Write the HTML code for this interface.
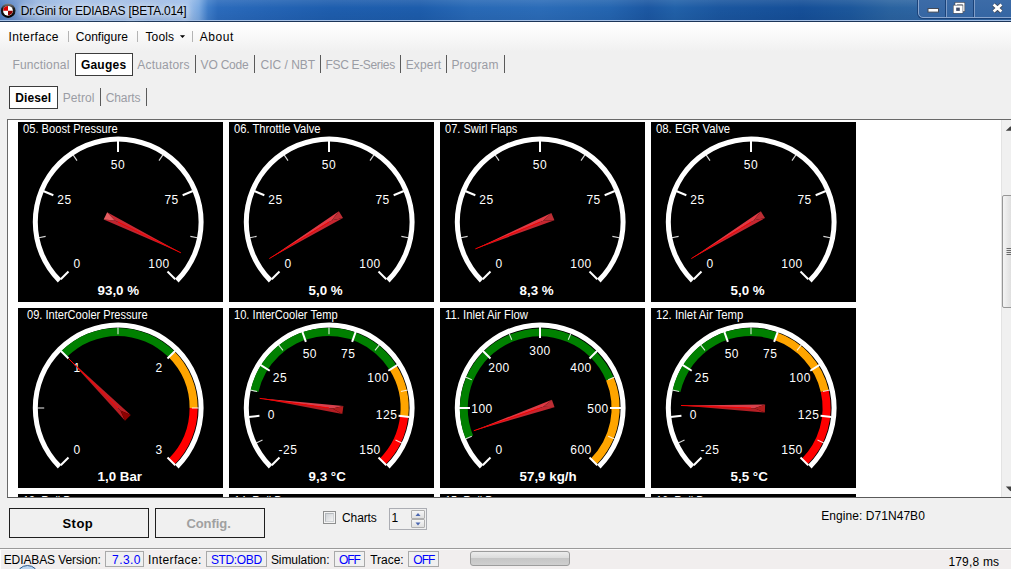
<!DOCTYPE html>
<html><head><meta charset="utf-8"><title>Dr.Gini for EDIABAS [BETA.014]</title>
<style>
html,body{margin:0;padding:0;}
body{width:1011px;height:569px;overflow:hidden;background:#f0f0f0;font-family:"Liberation Sans",sans-serif;}
#root{position:relative;width:1011px;height:569px;overflow:hidden;background:#f0f0f0;}
.t{position:absolute;white-space:nowrap;line-height:1;font-family:"Liberation Sans",sans-serif;}
.a{position:absolute;}
.g{position:absolute;width:205px;height:180px;background:#000;overflow:hidden;}
.g svg{position:absolute;left:0;top:0;}
svg text{font-family:"Liberation Sans",sans-serif;fill:#fff;}
</style></head><body><div id="root">

<div class="a" style="left:0;top:0;width:1011px;height:20px;background:linear-gradient(90deg,#4f7dc0 0px,#6c93cd 16px,#93b2df 36px,#a3c0e7 70px,#9ebce5 150px,#9fc0ea 188px,#7aa9e1 199px,#3f7dc9 208px,#2b6bbc 218px,#2464b5 270px,#1e5eae 330px,#1d5dac 420px,#2869b6 470px,#2b6cb8 540px,#2465b0 610px,#1b57a2 648px,#2161a9 675px,#1a569f 720px,#154f98 800px,#1c579b 850px,#2a63a0 890px,#2d65a2 917px);"></div>
<div class="a" style="left:0;top:0;width:1011px;height:20px;background:linear-gradient(180deg,rgba(255,255,255,0.10) 0,rgba(255,255,255,0) 8px,rgba(0,0,30,0.06) 20px);"></div>
<div class="a" style="left:0;top:20px;width:1011px;height:1px;background:#a4bfe4;"></div>
<div class="a" style="left:0;top:21px;width:1011px;height:1px;background:#1c3558;"></div>
<svg class="a" style="left:0;top:2px" width="17" height="18" viewBox="0 0 17 18">
<defs><linearGradient id="rg" x1="0" y1="0" x2="0" y2="1"><stop offset="0" stop-color="#8a8a8a"/><stop offset="0.35" stop-color="#1a1a1a"/><stop offset="1" stop-color="#000"/></linearGradient></defs>
<circle cx="8.2" cy="8.7" r="7.3" fill="url(#rg)"/>
<circle cx="8" cy="8.8" r="4.9" fill="#fff"/>
<path d="M8 8.7 L8 3.9 A4.8 4.8 0 0 0 3.2 8.7 Z" fill="#d80000"/>
<path d="M8 8.7 L8 13.5 A4.8 4.8 0 0 0 12.8 8.7 Z" fill="#8c0000"/>
</svg>
<span class="t" style="left:20.80px;top:5.00px;font-size:12px;letter-spacing:-0.256px;color:#000;text-shadow:0 0 5px rgba(255,255,255,0.9),0 0 9px rgba(255,255,255,0.7),0 0 12px rgba(255,255,255,0.5);">Dr.Gini for EDIABAS [BETA.014]</span>
<div class="a" style="left:918px;top:-3px;width:100px;height:19px;border:1px solid #89a6cf;border-radius:0 0 0 5px;background:linear-gradient(180deg,#3d6ca8,#3566a3);box-shadow:0 0 0 1px #1b4278;"></div>
<div class="a" style="left:945px;top:0;width:1px;height:17px;background:#1b4278;"></div><div class="a" style="left:946px;top:0;width:1px;height:17px;background:#7f9dc8;"></div>
<div class="a" style="left:973px;top:0;width:1px;height:17px;background:#1b4278;"></div><div class="a" style="left:974px;top:0;width:1px;height:17px;background:#7f9dc8;"></div>
<svg class="a" style="left:920px;top:0" width="91" height="18" viewBox="0 0 91 18">
<rect x="8" y="8.5" width="10.5" height="3.6" fill="#fff" stroke="#454b58" stroke-width="1"/>
<rect x="36.1" y="3.6" width="7.5" height="6.8" fill="none" stroke="#454b58" stroke-width="3"/>
<rect x="36.1" y="3.6" width="7.5" height="6.8" fill="none" stroke="#fff" stroke-width="1.7"/>
<rect x="33" y="4.9" width="10.2" height="8.8" fill="#454b58"/>
<rect x="33.6" y="5.5" width="9" height="7.6" fill="#fff"/>
<rect x="36.2" y="7.6" width="3.6" height="3.3" fill="#3f4a66"/>
<path d="M73.6 4.6 L81.4 11.6 M81.4 4.6 L73.6 11.6" stroke="#454b58" stroke-width="4.2" fill="none"/>
<path d="M73.6 4.6 L81.4 11.6 M81.4 4.6 L73.6 11.6" stroke="#fff" stroke-width="2.7" fill="none"/>
</svg>
<div class="a" style="left:0;top:22px;width:1011px;height:32px;background:linear-gradient(180deg,#ffffff 0,#fdfdfd 6px,#f0f0f0 30px);"></div>
<span class="t" style="left:8.50px;top:31.00px;font-size:12px;letter-spacing:0.412px;color:#000;">Interface</span>
<span class="t" style="left:75.80px;top:31.00px;font-size:12px;letter-spacing:0.007px;color:#000;">Configure</span>
<span class="t" style="left:145.40px;top:31.00px;font-size:12px;letter-spacing:0.177px;color:#000;">Tools</span>
<span class="t" style="left:199.70px;top:31.00px;font-size:12px;letter-spacing:0.588px;color:#000;">About</span>
<div class="a" style="left:68px;top:31px;width:1px;height:11px;background:#b4b4b4;"></div>
<div class="a" style="left:137px;top:31px;width:1px;height:11px;background:#b4b4b4;"></div>
<div class="a" style="left:192px;top:31px;width:1px;height:11px;background:#b4b4b4;"></div>
<svg class="a" style="left:179px;top:35px" width="8" height="5"><path d="M0.9 0.3 L6.1 0.3 L3.5 3 Z" fill="#000"/></svg>
<span class="t" style="left:12.40px;top:59.00px;font-size:12px;letter-spacing:0.173px;color:#9a9ca4;">Functional</span>
<div class="a" style="left:75px;top:53px;width:56px;height:21px;border:1px solid #3c3c3c;background:#fff;"></div>
<span class="t" style="left:80.90px;top:59.00px;font-size:12px;letter-spacing:0.231px;color:#000;font-weight:bold;">Gauges</span>
<span class="t" style="left:137.30px;top:59.00px;font-size:12px;letter-spacing:0.179px;color:#9a9ca4;">Actuators</span>
<span class="t" style="left:200.60px;top:59.00px;font-size:12px;letter-spacing:-0.209px;color:#9a9ca4;">VO Code</span>
<span class="t" style="left:260.50px;top:59.00px;font-size:12px;letter-spacing:0.004px;color:#9a9ca4;">CIC / NBT</span>
<span class="t" style="left:325.60px;top:59.00px;font-size:12px;letter-spacing:-0.346px;color:#9a9ca4;">FSC E-Series</span>
<span class="t" style="left:405.70px;top:59.00px;font-size:12px;letter-spacing:0.153px;color:#9a9ca4;">Expert</span>
<span class="t" style="left:451.40px;top:59.00px;font-size:12px;letter-spacing:0.169px;color:#9a9ca4;">Program</span>
<div class="a" style="left:195px;top:55px;width:1px;height:18px;background:#5a5a5a;"></div>
<div class="a" style="left:254px;top:55px;width:1px;height:18px;background:#5a5a5a;"></div>
<div class="a" style="left:320px;top:55px;width:1px;height:18px;background:#5a5a5a;"></div>
<div class="a" style="left:400px;top:55px;width:1px;height:18px;background:#5a5a5a;"></div>
<div class="a" style="left:446px;top:55px;width:1px;height:18px;background:#5a5a5a;"></div>
<div class="a" style="left:504px;top:55px;width:1px;height:18px;background:#5a5a5a;"></div>
<div class="a" style="left:9px;top:86px;width:47px;height:21px;border:1px solid #3c3c3c;background:#fff;"></div>
<span class="t" style="left:15.20px;top:92.00px;font-size:12px;letter-spacing:0.124px;color:#000;font-weight:bold;">Diesel</span>
<span class="t" style="left:62.70px;top:92.00px;font-size:12px;letter-spacing:0.075px;color:#9a9ca4;">Petrol</span>
<span class="t" style="left:105.80px;top:92.00px;font-size:12px;letter-spacing:-0.141px;color:#9a9ca4;">Charts</span>
<div class="a" style="left:100px;top:88px;width:1px;height:18px;background:#5a5a5a;"></div>
<div class="a" style="left:146px;top:88px;width:1px;height:18px;background:#5a5a5a;"></div>
<div class="a" style="left:7px;top:119px;width:1011px;height:377px;background:#fff;border-left:1px solid #696969;border-top:1px solid #696969;border-bottom:1px solid #5a5a5a;box-sizing:content-box;overflow:hidden;" id="panel">
<div class="g" style="left:10px;top:2px;"><svg width="205" height="180" viewBox="0 0 205 180"><path d="M39.81 160.39 A85.4 85.4 0 1 1 160.59 160.39 L157.05 156.85 A80.4 80.4 0 1 0 43.35 156.85 Z" fill="#fff"/><line x1="27.62" y1="114.40" x2="20.75" y2="115.76" stroke="#fff" stroke-opacity="0.85" stroke-width="1.1"/><line x1="59.00" y1="38.64" x2="55.11" y2="32.82" stroke="#fff" stroke-opacity="0.85" stroke-width="1.1"/><line x1="141.00" y1="38.64" x2="144.89" y2="32.82" stroke="#fff" stroke-opacity="0.85" stroke-width="1.1"/><line x1="172.38" y1="114.40" x2="179.25" y2="115.76" stroke="#fff" stroke-opacity="0.85" stroke-width="1.1"/><line x1="50.50" y1="149.50" x2="42.72" y2="157.28" stroke="#fff" stroke-width="2"/><text x="58.99" y="145.61" font-size="12" letter-spacing="0.5" text-anchor="middle">0</text><line x1="35.33" y1="73.21" x2="25.17" y2="69.00" stroke="#fff" stroke-width="2"/><text x="46.41" y="82.40" font-size="12" letter-spacing="0.5" text-anchor="middle">25</text><line x1="100.00" y1="30.00" x2="100.00" y2="19.00" stroke="#fff" stroke-width="2"/><text x="100.00" y="46.60" font-size="12" letter-spacing="0.5" text-anchor="middle">50</text><line x1="164.67" y1="73.21" x2="174.83" y2="69.00" stroke="#fff" stroke-width="2"/><text x="153.59" y="82.40" font-size="12" letter-spacing="0.5" text-anchor="middle">75</text><line x1="149.50" y1="149.50" x2="157.28" y2="157.28" stroke="#fff" stroke-width="2"/><text x="141.01" y="145.61" font-size="12" letter-spacing="0.5" text-anchor="middle">100</text><polygon points="162.86,130.80 96.86,98.46 85.67,97.43" fill="#be2530"/><polygon points="162.86,130.80 96.86,98.46 89.19,90.25" fill="#c82a34"/><polygon points="96.86,98.46 85.67,97.43 89.19,90.25" fill="#e65c60"/><line x1="100.0" y1="100.0" x2="162.86" y2="130.80" stroke="#ff0000" stroke-width="1"/><text x="5" y="11" font-size="12" textLength="94.7" lengthAdjust="spacingAndGlyphs">05. Boost Pressure</text><text x="79.6" y="172.7" font-size="13.33" font-weight="bold">93,0 %</text></svg></div>
<div class="g" style="left:221px;top:2px;"><svg width="205" height="180" viewBox="0 0 205 180"><path d="M39.81 160.39 A85.4 85.4 0 1 1 160.59 160.39 L157.05 156.85 A80.4 80.4 0 1 0 43.35 156.85 Z" fill="#fff"/><line x1="27.62" y1="114.40" x2="20.75" y2="115.76" stroke="#fff" stroke-opacity="0.85" stroke-width="1.1"/><line x1="59.00" y1="38.64" x2="55.11" y2="32.82" stroke="#fff" stroke-opacity="0.85" stroke-width="1.1"/><line x1="141.00" y1="38.64" x2="144.89" y2="32.82" stroke="#fff" stroke-opacity="0.85" stroke-width="1.1"/><line x1="172.38" y1="114.40" x2="179.25" y2="115.76" stroke="#fff" stroke-opacity="0.85" stroke-width="1.1"/><line x1="50.50" y1="149.50" x2="42.72" y2="157.28" stroke="#fff" stroke-width="2"/><text x="58.99" y="145.61" font-size="12" letter-spacing="0.5" text-anchor="middle">0</text><line x1="35.33" y1="73.21" x2="25.17" y2="69.00" stroke="#fff" stroke-width="2"/><text x="46.41" y="82.40" font-size="12" letter-spacing="0.5" text-anchor="middle">25</text><line x1="100.00" y1="30.00" x2="100.00" y2="19.00" stroke="#fff" stroke-width="2"/><text x="100.00" y="46.60" font-size="12" letter-spacing="0.5" text-anchor="middle">50</text><line x1="164.67" y1="73.21" x2="174.83" y2="69.00" stroke="#fff" stroke-width="2"/><text x="153.59" y="82.40" font-size="12" letter-spacing="0.5" text-anchor="middle">75</text><line x1="149.50" y1="149.50" x2="157.28" y2="157.28" stroke="#fff" stroke-width="2"/><text x="141.01" y="145.61" font-size="12" letter-spacing="0.5" text-anchor="middle">100</text><polygon points="40.32,136.57 102.98,98.17 109.85,89.27" fill="#e03a44"/><polygon points="40.32,136.57 102.98,98.17 114.03,96.10" fill="#c42630"/><polygon points="102.98,98.17 109.85,89.27 114.03,96.10" fill="#bc2e34"/><line x1="100.0" y1="100.0" x2="40.32" y2="136.57" stroke="#ff0000" stroke-width="1"/><text x="5" y="11" font-size="12" textLength="86.6" lengthAdjust="spacingAndGlyphs">06. Throttle Valve</text><text x="79.6" y="172.7" font-size="13.33" font-weight="bold">5,0 %</text></svg></div>
<div class="g" style="left:432px;top:2px;"><svg width="205" height="180" viewBox="0 0 205 180"><path d="M39.81 160.39 A85.4 85.4 0 1 1 160.59 160.39 L157.05 156.85 A80.4 80.4 0 1 0 43.35 156.85 Z" fill="#fff"/><line x1="27.62" y1="114.40" x2="20.75" y2="115.76" stroke="#fff" stroke-opacity="0.85" stroke-width="1.1"/><line x1="59.00" y1="38.64" x2="55.11" y2="32.82" stroke="#fff" stroke-opacity="0.85" stroke-width="1.1"/><line x1="141.00" y1="38.64" x2="144.89" y2="32.82" stroke="#fff" stroke-opacity="0.85" stroke-width="1.1"/><line x1="172.38" y1="114.40" x2="179.25" y2="115.76" stroke="#fff" stroke-opacity="0.85" stroke-width="1.1"/><line x1="50.50" y1="149.50" x2="42.72" y2="157.28" stroke="#fff" stroke-width="2"/><text x="58.99" y="145.61" font-size="12" letter-spacing="0.5" text-anchor="middle">0</text><line x1="35.33" y1="73.21" x2="25.17" y2="69.00" stroke="#fff" stroke-width="2"/><text x="46.41" y="82.40" font-size="12" letter-spacing="0.5" text-anchor="middle">25</text><line x1="100.00" y1="30.00" x2="100.00" y2="19.00" stroke="#fff" stroke-width="2"/><text x="100.00" y="46.60" font-size="12" letter-spacing="0.5" text-anchor="middle">50</text><line x1="164.67" y1="73.21" x2="174.83" y2="69.00" stroke="#fff" stroke-width="2"/><text x="153.59" y="82.40" font-size="12" letter-spacing="0.5" text-anchor="middle">75</text><line x1="149.50" y1="149.50" x2="157.28" y2="157.28" stroke="#fff" stroke-width="2"/><text x="141.01" y="145.61" font-size="12" letter-spacing="0.5" text-anchor="middle">100</text><polygon points="35.37,126.89 103.23,98.66 111.39,90.93" fill="#e03a44"/><polygon points="35.37,126.89 103.23,98.66 114.46,98.32" fill="#c42630"/><polygon points="103.23,98.66 111.39,90.93 114.46,98.32" fill="#bc2e34"/><line x1="100.0" y1="100.0" x2="35.37" y2="126.89" stroke="#ff0000" stroke-width="1"/><text x="5" y="11" font-size="12" textLength="72.4" lengthAdjust="spacingAndGlyphs">07. Swirl Flaps</text><text x="79.6" y="172.7" font-size="13.33" font-weight="bold">8,3 %</text></svg></div>
<div class="g" style="left:643px;top:2px;"><svg width="205" height="180" viewBox="0 0 205 180"><path d="M39.81 160.39 A85.4 85.4 0 1 1 160.59 160.39 L157.05 156.85 A80.4 80.4 0 1 0 43.35 156.85 Z" fill="#fff"/><line x1="27.62" y1="114.40" x2="20.75" y2="115.76" stroke="#fff" stroke-opacity="0.85" stroke-width="1.1"/><line x1="59.00" y1="38.64" x2="55.11" y2="32.82" stroke="#fff" stroke-opacity="0.85" stroke-width="1.1"/><line x1="141.00" y1="38.64" x2="144.89" y2="32.82" stroke="#fff" stroke-opacity="0.85" stroke-width="1.1"/><line x1="172.38" y1="114.40" x2="179.25" y2="115.76" stroke="#fff" stroke-opacity="0.85" stroke-width="1.1"/><line x1="50.50" y1="149.50" x2="42.72" y2="157.28" stroke="#fff" stroke-width="2"/><text x="58.99" y="145.61" font-size="12" letter-spacing="0.5" text-anchor="middle">0</text><line x1="35.33" y1="73.21" x2="25.17" y2="69.00" stroke="#fff" stroke-width="2"/><text x="46.41" y="82.40" font-size="12" letter-spacing="0.5" text-anchor="middle">25</text><line x1="100.00" y1="30.00" x2="100.00" y2="19.00" stroke="#fff" stroke-width="2"/><text x="100.00" y="46.60" font-size="12" letter-spacing="0.5" text-anchor="middle">50</text><line x1="164.67" y1="73.21" x2="174.83" y2="69.00" stroke="#fff" stroke-width="2"/><text x="153.59" y="82.40" font-size="12" letter-spacing="0.5" text-anchor="middle">75</text><line x1="149.50" y1="149.50" x2="157.28" y2="157.28" stroke="#fff" stroke-width="2"/><text x="141.01" y="145.61" font-size="12" letter-spacing="0.5" text-anchor="middle">100</text><polygon points="40.32,136.57 102.98,98.17 109.85,89.27" fill="#e03a44"/><polygon points="40.32,136.57 102.98,98.17 114.03,96.10" fill="#c42630"/><polygon points="102.98,98.17 109.85,89.27 114.03,96.10" fill="#bc2e34"/><line x1="100.0" y1="100.0" x2="40.32" y2="136.57" stroke="#ff0000" stroke-width="1"/><text x="5" y="11" font-size="12" textLength="74.1" lengthAdjust="spacingAndGlyphs">08. EGR Valve</text><text x="79.6" y="172.7" font-size="13.33" font-weight="bold">5,0 %</text></svg></div>
<div class="g" style="left:10px;top:188px;"><svg width="205" height="180" viewBox="0 0 205 180"><path d="M39.81 160.39 A85.4 85.4 0 1 1 160.59 160.39 L157.05 156.85 A80.4 80.4 0 1 0 43.35 156.85 Z" fill="#fff"/><path d="M42.96 43.36 A80.1 80.1 0 0 1 156.24 43.36 L150.51 49.09 A72 72 0 0 0 48.69 49.09 Z" fill="#008000"/><path d="M156.24 43.36 A80.1 80.1 0 0 1 179.70 100.00 L171.60 100.00 A72 72 0 0 0 150.51 49.09 Z" fill="#ffa500"/><path d="M179.70 100.00 A80.1 80.1 0 0 1 156.24 156.64 L150.51 150.91 A72 72 0 0 0 171.60 100.00 Z" fill="#ff0000"/><line x1="26.20" y1="100.00" x2="19.20" y2="100.00" stroke="#fff" stroke-opacity="0.85" stroke-width="1.1"/><line x1="100.00" y1="26.20" x2="100.00" y2="19.20" stroke="#fff" stroke-opacity="0.85" stroke-width="1.1"/><line x1="173.80" y1="100.00" x2="180.80" y2="100.00" stroke="#fff" stroke-opacity="0.85" stroke-width="1.1"/><line x1="50.50" y1="149.50" x2="42.72" y2="157.28" stroke="#fff" stroke-width="2"/><text x="58.99" y="145.61" font-size="12" letter-spacing="0.5" text-anchor="middle">0</text><line x1="50.50" y1="50.50" x2="42.72" y2="42.72" stroke="#fff" stroke-width="2"/><text x="58.99" y="63.59" font-size="12" letter-spacing="0.5" text-anchor="middle">1</text><line x1="149.50" y1="50.50" x2="157.28" y2="42.72" stroke="#fff" stroke-width="2"/><text x="141.01" y="63.59" font-size="12" letter-spacing="0.5" text-anchor="middle">2</text><line x1="149.50" y1="149.50" x2="157.28" y2="157.28" stroke="#fff" stroke-width="2"/><text x="141.01" y="145.61" font-size="12" letter-spacing="0.5" text-anchor="middle">3</text><polygon points="50.50,50.50 102.47,102.47 112.73,107.07" fill="#bc2026"/><polygon points="50.50,50.50 102.47,102.47 107.07,112.73" fill="#b81e24"/><polygon points="102.47,102.47 112.73,107.07 107.07,112.73" fill="#8c0000"/><line x1="100.0" y1="100.0" x2="50.50" y2="50.50" stroke="#ff0000" stroke-width="1"/><text x="9" y="11" font-size="12" textLength="120.6" lengthAdjust="spacingAndGlyphs">09. InterCooler Pressure</text><text x="79.6" y="172.7" font-size="13.33" font-weight="bold">1,0 Bar</text></svg></div>
<div class="g" style="left:221px;top:188px;"><svg width="205" height="180" viewBox="0 0 205 180"><path d="M39.81 160.39 A85.4 85.4 0 1 1 160.59 160.39 L157.05 156.85 A80.4 80.4 0 1 0 43.35 156.85 Z" fill="#fff"/><path d="M21.51 82.18 A80.1 80.1 0 0 1 167.42 57.38 L160.56 61.69 A72 72 0 0 0 29.41 83.98 Z" fill="#008000"/><path d="M167.42 57.38 A80.1 80.1 0 0 1 179.20 108.97 L171.15 108.06 A72 72 0 0 0 160.56 61.69 Z" fill="#ffa500"/><path d="M179.20 108.97 A80.1 80.1 0 0 1 156.24 156.64 L150.51 150.91 A72 72 0 0 0 171.15 108.06 Z" fill="#ff0000"/><line x1="33.51" y1="132.02" x2="27.20" y2="135.06" stroke="#fff" stroke-opacity="0.85" stroke-width="1.1"/><line x1="28.05" y1="83.58" x2="21.23" y2="82.02" stroke="#fff" stroke-opacity="0.85" stroke-width="1.1"/><line x1="53.99" y1="42.30" x2="49.62" y2="36.83" stroke="#fff" stroke-opacity="0.85" stroke-width="1.1"/><line x1="100.00" y1="26.20" x2="100.00" y2="19.20" stroke="#fff" stroke-opacity="0.85" stroke-width="1.1"/><line x1="146.01" y1="42.30" x2="150.38" y2="36.83" stroke="#fff" stroke-opacity="0.85" stroke-width="1.1"/><line x1="171.95" y1="83.58" x2="178.77" y2="82.02" stroke="#fff" stroke-opacity="0.85" stroke-width="1.1"/><line x1="166.49" y1="132.02" x2="172.80" y2="135.06" stroke="#fff" stroke-opacity="0.85" stroke-width="1.1"/><line x1="50.50" y1="149.50" x2="42.72" y2="157.28" stroke="#fff" stroke-width="2"/><text x="58.99" y="145.61" font-size="12" letter-spacing="0.5" text-anchor="middle">-25</text><line x1="30.44" y1="107.84" x2="19.51" y2="109.07" stroke="#fff" stroke-width="2"/><text x="42.36" y="111.09" font-size="12" letter-spacing="0.5" text-anchor="middle">0</text><line x1="40.73" y1="62.76" x2="31.42" y2="56.91" stroke="#fff" stroke-width="2"/><text x="50.89" y="73.74" font-size="12" letter-spacing="0.5" text-anchor="middle">25</text><line x1="76.88" y1="33.93" x2="73.25" y2="23.55" stroke="#fff" stroke-width="2"/><text x="80.84" y="49.85" font-size="12" letter-spacing="0.5" text-anchor="middle">50</text><line x1="123.12" y1="33.93" x2="126.75" y2="23.55" stroke="#fff" stroke-width="2"/><text x="119.16" y="49.85" font-size="12" letter-spacing="0.5" text-anchor="middle">75</text><line x1="159.27" y1="62.76" x2="168.58" y2="56.91" stroke="#fff" stroke-width="2"/><text x="149.11" y="73.74" font-size="12" letter-spacing="0.5" text-anchor="middle">100</text><line x1="169.56" y1="107.84" x2="180.49" y2="109.07" stroke="#fff" stroke-width="2"/><text x="157.64" y="111.09" font-size="12" letter-spacing="0.5" text-anchor="middle">125</text><line x1="149.50" y1="149.50" x2="157.28" y2="157.28" stroke="#fff" stroke-width="2"/><text x="141.01" y="145.61" font-size="12" letter-spacing="0.5" text-anchor="middle">150</text><polygon points="30.67,90.35 103.47,100.48 114.42,97.97" fill="#d8404c"/><polygon points="30.67,90.35 103.47,100.48 113.32,105.89" fill="#b41e24"/><polygon points="103.47,100.48 114.42,97.97 113.32,105.89" fill="#b01c1c"/><line x1="100.0" y1="100.0" x2="30.67" y2="90.35" stroke="#ff0000" stroke-width="1"/><text x="5" y="11" font-size="12" textLength="103.6" lengthAdjust="spacingAndGlyphs">10. InterCooler Temp</text><text x="79.6" y="172.7" font-size="13.33" font-weight="bold">9,3 °C</text></svg></div>
<div class="g" style="left:432px;top:188px;"><svg width="205" height="180" viewBox="0 0 205 180"><path d="M39.81 160.39 A85.4 85.4 0 1 1 160.59 160.39 L157.05 156.85 A80.4 80.4 0 1 0 43.35 156.85 Z" fill="#fff"/><path d="M25.60 130.65 A80.1 80.1 0 0 1 173.60 69.35 L166.12 72.45 A72 72 0 0 0 33.08 127.55 Z" fill="#008000"/><path d="M173.60 69.35 A80.1 80.1 0 0 1 156.24 156.64 L150.51 150.91 A72 72 0 0 0 166.12 72.45 Z" fill="#ffa500"/><line x1="31.82" y1="128.24" x2="25.35" y2="130.92" stroke="#fff" stroke-opacity="0.85" stroke-width="1.1"/><line x1="31.82" y1="71.76" x2="25.35" y2="69.08" stroke="#fff" stroke-opacity="0.85" stroke-width="1.1"/><line x1="71.76" y1="31.82" x2="69.08" y2="25.35" stroke="#fff" stroke-opacity="0.85" stroke-width="1.1"/><line x1="128.24" y1="31.82" x2="130.92" y2="25.35" stroke="#fff" stroke-opacity="0.85" stroke-width="1.1"/><line x1="168.18" y1="71.76" x2="174.65" y2="69.08" stroke="#fff" stroke-opacity="0.85" stroke-width="1.1"/><line x1="168.18" y1="128.24" x2="174.65" y2="130.92" stroke="#fff" stroke-opacity="0.85" stroke-width="1.1"/><line x1="50.50" y1="149.50" x2="42.72" y2="157.28" stroke="#fff" stroke-width="2"/><text x="58.99" y="146.41" font-size="12" letter-spacing="0.5" text-anchor="middle">0</text><line x1="30.00" y1="100.00" x2="19.00" y2="100.00" stroke="#fff" stroke-width="2"/><text x="42.00" y="105.40" font-size="12" letter-spacing="0.5" text-anchor="middle">100</text><line x1="50.50" y1="50.50" x2="42.72" y2="42.72" stroke="#fff" stroke-width="2"/><text x="58.99" y="64.39" font-size="12" letter-spacing="0.5" text-anchor="middle">200</text><line x1="100.00" y1="30.00" x2="100.00" y2="19.00" stroke="#fff" stroke-width="2"/><text x="100.00" y="47.40" font-size="12" letter-spacing="0.5" text-anchor="middle">300</text><line x1="149.50" y1="50.50" x2="157.28" y2="42.72" stroke="#fff" stroke-width="2"/><text x="141.01" y="64.39" font-size="12" letter-spacing="0.5" text-anchor="middle">400</text><line x1="170.00" y1="100.00" x2="181.00" y2="100.00" stroke="#fff" stroke-width="2"/><text x="158.00" y="105.40" font-size="12" letter-spacing="0.5" text-anchor="middle">500</text><line x1="149.50" y1="149.50" x2="157.28" y2="157.28" stroke="#fff" stroke-width="2"/><text x="141.01" y="146.41" font-size="12" letter-spacing="0.5" text-anchor="middle">600</text><polygon points="33.79,122.73 103.31,98.86 111.94,91.67" fill="#e03a44"/><polygon points="33.79,122.73 103.31,98.86 114.54,99.24" fill="#c42630"/><polygon points="103.31,98.86 111.94,91.67 114.54,99.24" fill="#bc2e34"/><line x1="100.0" y1="100.0" x2="33.79" y2="122.73" stroke="#ff0000" stroke-width="1"/><text x="5" y="11" font-size="12" textLength="82.9" lengthAdjust="spacingAndGlyphs">11. Inlet Air Flow</text><text x="79.6" y="172.7" font-size="13.33" font-weight="bold">57,9 kg/h</text></svg></div>
<div class="g" style="left:643px;top:188px;"><svg width="205" height="180" viewBox="0 0 205 180"><path d="M39.81 160.39 A85.4 85.4 0 1 1 160.59 160.39 L157.05 156.85 A80.4 80.4 0 1 0 43.35 156.85 Z" fill="#fff"/><path d="M21.51 82.18 A80.1 80.1 0 0 1 126.06 24.39 L123.38 32.04 A72 72 0 0 0 29.41 83.98 Z" fill="#008000"/><path d="M126.06 24.39 A80.1 80.1 0 0 1 177.69 82.18 L169.79 83.98 A72 72 0 0 0 123.38 32.04 Z" fill="#ffa500"/><path d="M177.69 82.18 A80.1 80.1 0 0 1 156.24 156.64 L150.51 150.91 A72 72 0 0 0 169.79 83.98 Z" fill="#ff0000"/><line x1="33.51" y1="132.02" x2="27.20" y2="135.06" stroke="#fff" stroke-opacity="0.85" stroke-width="1.1"/><line x1="28.05" y1="83.58" x2="21.23" y2="82.02" stroke="#fff" stroke-opacity="0.85" stroke-width="1.1"/><line x1="53.99" y1="42.30" x2="49.62" y2="36.83" stroke="#fff" stroke-opacity="0.85" stroke-width="1.1"/><line x1="100.00" y1="26.20" x2="100.00" y2="19.20" stroke="#fff" stroke-opacity="0.85" stroke-width="1.1"/><line x1="146.01" y1="42.30" x2="150.38" y2="36.83" stroke="#fff" stroke-opacity="0.85" stroke-width="1.1"/><line x1="171.95" y1="83.58" x2="178.77" y2="82.02" stroke="#fff" stroke-opacity="0.85" stroke-width="1.1"/><line x1="166.49" y1="132.02" x2="172.80" y2="135.06" stroke="#fff" stroke-opacity="0.85" stroke-width="1.1"/><line x1="50.50" y1="149.50" x2="42.72" y2="157.28" stroke="#fff" stroke-width="2"/><text x="58.99" y="145.61" font-size="12" letter-spacing="0.5" text-anchor="middle">-25</text><line x1="30.44" y1="107.84" x2="19.51" y2="109.07" stroke="#fff" stroke-width="2"/><text x="42.36" y="111.09" font-size="12" letter-spacing="0.5" text-anchor="middle">0</text><line x1="40.73" y1="62.76" x2="31.42" y2="56.91" stroke="#fff" stroke-width="2"/><text x="50.89" y="73.74" font-size="12" letter-spacing="0.5" text-anchor="middle">25</text><line x1="76.88" y1="33.93" x2="73.25" y2="23.55" stroke="#fff" stroke-width="2"/><text x="80.84" y="49.85" font-size="12" letter-spacing="0.5" text-anchor="middle">50</text><line x1="123.12" y1="33.93" x2="126.75" y2="23.55" stroke="#fff" stroke-width="2"/><text x="119.16" y="49.85" font-size="12" letter-spacing="0.5" text-anchor="middle">75</text><line x1="159.27" y1="62.76" x2="168.58" y2="56.91" stroke="#fff" stroke-width="2"/><text x="149.11" y="73.74" font-size="12" letter-spacing="0.5" text-anchor="middle">100</text><line x1="169.56" y1="107.84" x2="180.49" y2="109.07" stroke="#fff" stroke-width="2"/><text x="157.64" y="111.09" font-size="12" letter-spacing="0.5" text-anchor="middle">125</text><line x1="149.50" y1="149.50" x2="157.28" y2="157.28" stroke="#fff" stroke-width="2"/><text x="141.01" y="145.61" font-size="12" letter-spacing="0.5" text-anchor="middle">150</text><polygon points="30.05,97.49 103.50,100.13 114.13,96.51" fill="#d8404c"/><polygon points="30.05,97.49 103.50,100.13 113.85,104.50" fill="#b41e24"/><polygon points="103.50,100.13 114.13,96.51 113.85,104.50" fill="#b01c1c"/><line x1="100.0" y1="100.0" x2="30.05" y2="97.49" stroke="#ff0000" stroke-width="1"/><text x="5" y="11" font-size="12" textLength="87.3" lengthAdjust="spacingAndGlyphs">12. Inlet Air Temp</text><text x="79.6" y="172.7" font-size="13.33" font-weight="bold">5,5 °C</text></svg></div>
<div class="g" style="left:10px;top:374px;"><svg width="205" height="180" viewBox="0 0 205 180"><path d="M39.81 160.39 A85.4 85.4 0 1 1 160.59 160.39 L157.05 156.85 A80.4 80.4 0 1 0 43.35 156.85 Z" fill="#fff"/><line x1="27.62" y1="114.40" x2="20.75" y2="115.76" stroke="#fff" stroke-opacity="0.85" stroke-width="1.1"/><line x1="59.00" y1="38.64" x2="55.11" y2="32.82" stroke="#fff" stroke-opacity="0.85" stroke-width="1.1"/><line x1="141.00" y1="38.64" x2="144.89" y2="32.82" stroke="#fff" stroke-opacity="0.85" stroke-width="1.1"/><line x1="172.38" y1="114.40" x2="179.25" y2="115.76" stroke="#fff" stroke-opacity="0.85" stroke-width="1.1"/><line x1="50.50" y1="149.50" x2="42.72" y2="157.28" stroke="#fff" stroke-width="2"/><text x="58.99" y="145.61" font-size="12" letter-spacing="0.5" text-anchor="middle">0</text><line x1="35.33" y1="73.21" x2="25.17" y2="69.00" stroke="#fff" stroke-width="2"/><text x="46.41" y="82.40" font-size="12" letter-spacing="0.5" text-anchor="middle">500</text><line x1="100.00" y1="30.00" x2="100.00" y2="19.00" stroke="#fff" stroke-width="2"/><text x="100.00" y="46.60" font-size="12" letter-spacing="0.5" text-anchor="middle">1000</text><line x1="164.67" y1="73.21" x2="174.83" y2="69.00" stroke="#fff" stroke-width="2"/><text x="153.59" y="82.40" font-size="12" letter-spacing="0.5" text-anchor="middle">1500</text><line x1="149.50" y1="149.50" x2="157.28" y2="157.28" stroke="#fff" stroke-width="2"/><text x="141.01" y="145.61" font-size="12" letter-spacing="0.5" text-anchor="middle">2000</text><polygon points="30.22,105.49 103.49,99.73 113.64,94.91" fill="#e03a44"/><polygon points="30.22,105.49 103.49,99.73 114.27,102.89" fill="#c42630"/><polygon points="103.49,99.73 113.64,94.91 114.27,102.89" fill="#bc2e34"/><line x1="100.0" y1="100.0" x2="30.22" y2="105.49" stroke="#ff0000" stroke-width="1"/><text x="5" y="11" font-size="12" textLength="84.4" lengthAdjust="spacingAndGlyphs">13. Rail Pressure</text><text x="79.6" y="172.7" font-size="13.33" font-weight="bold">300 Bar</text></svg></div>
<div class="g" style="left:221px;top:374px;"><svg width="205" height="180" viewBox="0 0 205 180"><path d="M39.81 160.39 A85.4 85.4 0 1 1 160.59 160.39 L157.05 156.85 A80.4 80.4 0 1 0 43.35 156.85 Z" fill="#fff"/><line x1="27.62" y1="114.40" x2="20.75" y2="115.76" stroke="#fff" stroke-opacity="0.85" stroke-width="1.1"/><line x1="59.00" y1="38.64" x2="55.11" y2="32.82" stroke="#fff" stroke-opacity="0.85" stroke-width="1.1"/><line x1="141.00" y1="38.64" x2="144.89" y2="32.82" stroke="#fff" stroke-opacity="0.85" stroke-width="1.1"/><line x1="172.38" y1="114.40" x2="179.25" y2="115.76" stroke="#fff" stroke-opacity="0.85" stroke-width="1.1"/><line x1="50.50" y1="149.50" x2="42.72" y2="157.28" stroke="#fff" stroke-width="2"/><text x="58.99" y="145.61" font-size="12" letter-spacing="0.5" text-anchor="middle">0</text><line x1="35.33" y1="73.21" x2="25.17" y2="69.00" stroke="#fff" stroke-width="2"/><text x="46.41" y="82.40" font-size="12" letter-spacing="0.5" text-anchor="middle">500</text><line x1="100.00" y1="30.00" x2="100.00" y2="19.00" stroke="#fff" stroke-width="2"/><text x="100.00" y="46.60" font-size="12" letter-spacing="0.5" text-anchor="middle">1000</text><line x1="164.67" y1="73.21" x2="174.83" y2="69.00" stroke="#fff" stroke-width="2"/><text x="153.59" y="82.40" font-size="12" letter-spacing="0.5" text-anchor="middle">1500</text><line x1="149.50" y1="149.50" x2="157.28" y2="157.28" stroke="#fff" stroke-width="2"/><text x="141.01" y="145.61" font-size="12" letter-spacing="0.5" text-anchor="middle">2000</text><polygon points="30.22,105.49 103.49,99.73 113.64,94.91" fill="#e03a44"/><polygon points="30.22,105.49 103.49,99.73 114.27,102.89" fill="#c42630"/><polygon points="103.49,99.73 113.64,94.91 114.27,102.89" fill="#bc2e34"/><line x1="100.0" y1="100.0" x2="30.22" y2="105.49" stroke="#ff0000" stroke-width="1"/><text x="5" y="11" font-size="12" textLength="111.9" lengthAdjust="spacingAndGlyphs">14. Rail Pressure nom.</text><text x="79.6" y="172.7" font-size="13.33" font-weight="bold">300 Bar</text></svg></div>
<div class="g" style="left:432px;top:374px;"><svg width="205" height="180" viewBox="0 0 205 180"><path d="M39.81 160.39 A85.4 85.4 0 1 1 160.59 160.39 L157.05 156.85 A80.4 80.4 0 1 0 43.35 156.85 Z" fill="#fff"/><line x1="27.62" y1="114.40" x2="20.75" y2="115.76" stroke="#fff" stroke-opacity="0.85" stroke-width="1.1"/><line x1="59.00" y1="38.64" x2="55.11" y2="32.82" stroke="#fff" stroke-opacity="0.85" stroke-width="1.1"/><line x1="141.00" y1="38.64" x2="144.89" y2="32.82" stroke="#fff" stroke-opacity="0.85" stroke-width="1.1"/><line x1="172.38" y1="114.40" x2="179.25" y2="115.76" stroke="#fff" stroke-opacity="0.85" stroke-width="1.1"/><line x1="50.50" y1="149.50" x2="42.72" y2="157.28" stroke="#fff" stroke-width="2"/><text x="58.99" y="145.61" font-size="12" letter-spacing="0.5" text-anchor="middle">0</text><line x1="35.33" y1="73.21" x2="25.17" y2="69.00" stroke="#fff" stroke-width="2"/><text x="46.41" y="82.40" font-size="12" letter-spacing="0.5" text-anchor="middle">25</text><line x1="100.00" y1="30.00" x2="100.00" y2="19.00" stroke="#fff" stroke-width="2"/><text x="100.00" y="46.60" font-size="12" letter-spacing="0.5" text-anchor="middle">50</text><line x1="164.67" y1="73.21" x2="174.83" y2="69.00" stroke="#fff" stroke-width="2"/><text x="153.59" y="82.40" font-size="12" letter-spacing="0.5" text-anchor="middle">75</text><line x1="149.50" y1="149.50" x2="157.28" y2="157.28" stroke="#fff" stroke-width="2"/><text x="141.01" y="145.61" font-size="12" letter-spacing="0.5" text-anchor="middle">100</text><polygon points="30.86,89.05 103.46,100.55 114.45,98.24" fill="#e03a44"/><polygon points="30.86,89.05 103.46,100.55 113.20,106.14" fill="#c42630"/><polygon points="103.46,100.55 114.45,98.24 113.20,106.14" fill="#bc2e34"/><line x1="100.0" y1="100.0" x2="30.86" y2="89.05" stroke="#ff0000" stroke-width="1"/><text x="5" y="11" font-size="12" textLength="111.3" lengthAdjust="spacingAndGlyphs">15. Rail Pressure max.</text><text x="79.6" y="172.7" font-size="13.33" font-weight="bold">20,0 %</text></svg></div>
<div class="g" style="left:643px;top:374px;"><svg width="205" height="180" viewBox="0 0 205 180"><path d="M39.81 160.39 A85.4 85.4 0 1 1 160.59 160.39 L157.05 156.85 A80.4 80.4 0 1 0 43.35 156.85 Z" fill="#fff"/><line x1="27.62" y1="114.40" x2="20.75" y2="115.76" stroke="#fff" stroke-opacity="0.85" stroke-width="1.1"/><line x1="59.00" y1="38.64" x2="55.11" y2="32.82" stroke="#fff" stroke-opacity="0.85" stroke-width="1.1"/><line x1="141.00" y1="38.64" x2="144.89" y2="32.82" stroke="#fff" stroke-opacity="0.85" stroke-width="1.1"/><line x1="172.38" y1="114.40" x2="179.25" y2="115.76" stroke="#fff" stroke-opacity="0.85" stroke-width="1.1"/><line x1="50.50" y1="149.50" x2="42.72" y2="157.28" stroke="#fff" stroke-width="2"/><text x="58.99" y="145.61" font-size="12" letter-spacing="0.5" text-anchor="middle">0</text><line x1="35.33" y1="73.21" x2="25.17" y2="69.00" stroke="#fff" stroke-width="2"/><text x="46.41" y="82.40" font-size="12" letter-spacing="0.5" text-anchor="middle">25</text><line x1="100.00" y1="30.00" x2="100.00" y2="19.00" stroke="#fff" stroke-width="2"/><text x="100.00" y="46.60" font-size="12" letter-spacing="0.5" text-anchor="middle">50</text><line x1="164.67" y1="73.21" x2="174.83" y2="69.00" stroke="#fff" stroke-width="2"/><text x="153.59" y="82.40" font-size="12" letter-spacing="0.5" text-anchor="middle">75</text><line x1="149.50" y1="149.50" x2="157.28" y2="157.28" stroke="#fff" stroke-width="2"/><text x="141.01" y="145.61" font-size="12" letter-spacing="0.5" text-anchor="middle">100</text><polygon points="30.86,89.05 103.46,100.55 114.45,98.24" fill="#e03a44"/><polygon points="30.86,89.05 103.46,100.55 113.20,106.14" fill="#c42630"/><polygon points="103.46,100.55 114.45,98.24 113.20,106.14" fill="#bc2e34"/><line x1="100.0" y1="100.0" x2="30.86" y2="89.05" stroke="#ff0000" stroke-width="1"/><text x="5" y="11" font-size="12" textLength="108.8" lengthAdjust="spacingAndGlyphs">16. Rail Pressure corr.</text><text x="79.6" y="172.7" font-size="13.33" font-weight="bold">20,0 %</text></svg></div>
<div class="a" style="left:993px;top:0;width:17px;height:378px;background:#f0f0f0;border-left:1px solid #e3e3e3;"></div>
<div class="a" style="left:994px;top:75px;width:16px;height:113px;border:1px solid #979797;border-radius:2px;background:linear-gradient(90deg,#f4f4f4,#e2e2e2 50%,#cfcfcf);box-sizing:border-box;"></div>
<svg class="a" style="left:994px;top:0" width="17" height="378"><path d="M3.8 10.8 L8.5 6.2 L13.2 10.8 Z" fill="#404040"/><path d="M3.8 366.6 L13.2 366.6 L8.5 371.2 Z" fill="#404040"/><path d="M4.5 128.5 H12 M4.5 130.5 H12 M4.5 132.5 H12 M4.5 134.5 H12" stroke="#6a6a6a" stroke-width="1"/></svg>
</div>
<div class="a" style="left:9px;top:508px;width:138px;height:28px;border:1px solid #1e1e1e;background:#f0f0f0;"></div>
<span class="t" style="left:62.40px;top:517.00px;font-size:13px;letter-spacing:0.504px;color:#000;font-weight:bold;">Stop</span>
<div class="a" style="left:155px;top:508px;width:108px;height:28px;border:1px solid #1e1e1e;background:#f0f0f0;"></div>
<span class="t" style="left:186.40px;top:517.00px;font-size:13px;letter-spacing:-0.052px;color:#a0a0a0;font-weight:bold;">Config.</span>
<div class="a" style="left:323px;top:511px;width:11px;height:11px;border:1px solid #8e8f8f;background:#f4f4f4;"></div>
<div class="a" style="left:325px;top:513px;width:7px;height:7px;border:1px solid #b4b8bc;border-right-color:#cfd2d5;border-bottom-color:#cfd2d5;background:linear-gradient(135deg,#cfd3d7,#f3f3f3);"></div>
<span class="t" style="left:342.10px;top:512.00px;font-size:12px;letter-spacing:-0.141px;color:#000;">Charts</span>
<div class="a" style="left:389px;top:508px;width:36px;height:20px;border:1px solid #abadb3;background:#f0f0f0;"></div>
<span class="t" style="left:391.40px;top:512.00px;font-size:12px;letter-spacing:-1.274px;color:#000;">1</span>
<div class="a" style="left:411px;top:510px;width:12px;height:7px;border:1px solid #b0b0b0;background:linear-gradient(#f6f6f6,#e0e0e0);border-radius:1px;"></div>
<div class="a" style="left:411px;top:519px;width:12px;height:7px;border:1px solid #b0b0b0;background:linear-gradient(#f6f6f6,#e0e0e0);border-radius:1px;"></div>
<svg class="a" style="left:411px;top:510px" width="14" height="18"><path d="M4.5 6 L7 3 L9.5 6 Z" fill="#4a66b0"/><path d="M4.5 12.5 L9.5 12.5 L7 15.5 Z" fill="#4a66b0"/></svg>
<span class="t" style="left:821.30px;top:510.00px;font-size:12px;letter-spacing:0.054px;color:#000;">Engine: D71N47B0</span>
<div class="a" style="left:0;top:548px;width:1011px;height:21px;background:#f1eeee;border-top:1px solid #9a9a9a;box-sizing:border-box;"></div>
<div class="a" style="left:0;top:549px;width:1011px;height:1px;background:#fbfbfb;"></div>
<span class="t" style="left:3.70px;top:554.00px;font-size:12px;letter-spacing:-0.101px;color:#000;">EDIABAS Version:</span>
<div class="a" style="left:105px;top:551px;width:37px;height:14px;border:1px solid #a9a9a9;background:#f0f0f0;"></div>
<span class="t" style="left:112.10px;top:554.00px;font-size:12px;letter-spacing:0.402px;color:#0000ff;">7.3.0</span>
<span class="t" style="left:148.10px;top:554.00px;font-size:12px;letter-spacing:0.357px;color:#000;">Interface:</span>
<div class="a" style="left:206px;top:551px;width:59px;height:14px;border:1px solid #a9a9a9;background:#f0f0f0;"></div>
<span class="t" style="left:210.90px;top:554.00px;font-size:12px;letter-spacing:-0.348px;color:#0000ff;">STD:OBD</span>
<span class="t" style="left:270.90px;top:554.00px;font-size:12px;letter-spacing:-0.069px;color:#000;">Simulation:</span>
<div class="a" style="left:334px;top:551px;width:29px;height:14px;border:1px solid #a9a9a9;background:#f0f0f0;"></div>
<span class="t" style="left:339.10px;top:554.00px;font-size:12px;letter-spacing:-1.098px;color:#0000ff;">OFF</span>
<span class="t" style="left:370.20px;top:554.00px;font-size:12px;letter-spacing:-0.011px;color:#000;">Trace:</span>
<div class="a" style="left:408px;top:551px;width:29px;height:14px;border:1px solid #a9a9a9;background:#f0f0f0;"></div>
<span class="t" style="left:413.30px;top:554.00px;font-size:12px;letter-spacing:-0.998px;color:#0000ff;">OFF</span>
<div class="a" style="left:470px;top:551px;width:99px;height:15px;border:1px solid #9c9c9c;border-radius:3px;background:linear-gradient(180deg,#ececec 0,#dcdcdc 45%,#c6c6c6 50%,#cfcfcf 100%);box-sizing:border-box;width:100px;"></div>
<span class="t" style="left:948.40px;top:556.00px;font-size:12px;letter-spacing:0.192px;color:#000;">179,8 ms</span>
<div class="a" style="left:15.5px;top:565px;width:21px;height:21px;border-radius:50%;border:1.5px solid #2a5a8c;background:#bcd5ef;"></div>
<div class="a" style="left:0;top:550px;width:1px;height:19px;background:#fdfdfd;"></div>
</div></body></html>
